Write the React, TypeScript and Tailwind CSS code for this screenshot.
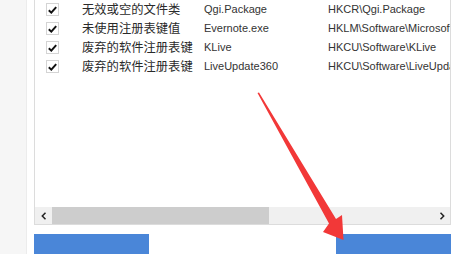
import React from "react";

const rows = [
  { name: "无效或空的文件类", item: "Qgi.Package", key: "HKCR\\Qgi.Package" },
  { name: "未使用注册表键值", item: "Evernote.exe", key: "HKLM\\Software\\Microsoft\\Windows" },
  { name: "废弃的软件注册表键", item: "KLive", key: "HKCU\\Software\\KLive" },
  { name: "废弃的软件注册表键", item: "LiveUpdate360", key: "HKCU\\Software\\LiveUpdate360" },
];

function Check() {
  return (
    <div className="w-[13px] h-[13px] border border-[#d4d4d4] bg-white flex items-center justify-center shrink-0">
      <svg width="9" height="8" viewBox="0 0 9 8">
        <path d="M0.8 4.2 L3.3 6.6 L8.2 1.2" stroke="#111" strokeWidth="2" fill="none" />
      </svg>
    </div>
  );
}

export default function App() {
  return (
    <div className="relative w-[461px] h-[254px] overflow-hidden bg-white flex" style={{ fontFamily: "'Noto Sans CJK SC', sans-serif" }}>
      <div className="w-[27px] h-full bg-[#f6f6f6] border-r border-[#ececec] shrink-0" />
      <div className="flex flex-col pl-[7px] w-[425px]">
        <div className="h-[235px] w-[417px] border-l border-r border-b border-[#dcdcdc] flex flex-col">
          <div className="flex-1 flex flex-col">
            {rows.map((r, i) => (
              <div key={i} className="h-[19px] flex items-center pl-[11px] whitespace-nowrap">
                <Check />
                <div className="ml-[23px] w-[122px] text-[12.3px] leading-none text-[#2a2a2a]">{r.name}</div>
                <div className="w-[124px] text-[11px] leading-none text-[#333]" style={{ fontFamily: "'Liberation Sans', sans-serif" }}>{r.item}</div>
                <div className="flex-1 overflow-hidden text-[11px] leading-none text-[#333]" style={{ fontFamily: "'Liberation Sans', sans-serif" }}>{r.key}</div>
              </div>
            ))}
          </div>
          <div className="h-[17px] flex bg-[#f0f0f0]">
            <div className="w-[17px] h-full flex items-center justify-center">
              <svg width="6" height="8" viewBox="0 0 6 8"><path d="M4.5 0.8 L1.3 4 L4.5 7.2" stroke="#222" strokeWidth="1.5" fill="none" /></svg>
            </div>
            <div className="w-[217px] h-full bg-[#cdcdcd]" />
            <div className="flex-1" />
            <div className="w-[17px] h-full flex items-center justify-center">
              <svg width="6" height="8" viewBox="0 0 6 8"><path d="M1.5 0.8 L4.7 4 L1.5 7.2" stroke="#222" strokeWidth="1.5" fill="none" /></svg>
            </div>
          </div>
        </div>
        <div className="mt-[9px] flex justify-between w-[417px]">
          <div className="w-[115px] h-[20px] bg-[#4a86d8]" />
          <div className="w-[115px] h-[20px] bg-[#4a86d8]" />
        </div>
      </div>
      <svg className="absolute inset-0 pointer-events-none" width="461" height="254" viewBox="0 0 461 254">
        <polygon points="257.5,93 259,92.5 336,219 342,215 343.5,240 323,232 329,223.5" fill="#f23838" />
      </svg>
    </div>
  );
}
